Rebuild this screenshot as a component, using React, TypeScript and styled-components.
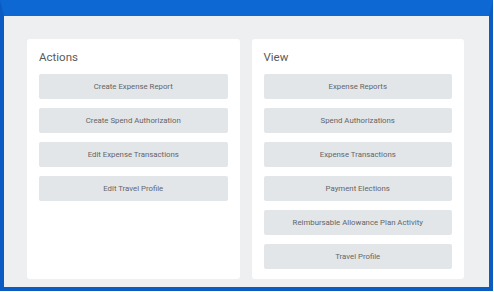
import styled, { createGlobalStyle } from "styled-components";

const GlobalStyle = createGlobalStyle`
  body {
    margin: 0;
    background: #ffffff;
    font-family: Roboto, "Liberation Sans", sans-serif;
  }
`;

const Frame = styled.div`
  box-sizing: border-box;
  width: 493px;
  height: 291px;
  border: 4px solid #0a5cc2;
  border-top: 16px solid #0d68d4;
  background: #eeeff1;
  padding: 23px 25px 8px 23px;
  display: flex;
  gap: 12px;
`;

const Card = styled.section`
  flex: 1;
  background: #ffffff;
  border-radius: 3px;
  padding: 11px 12px 10px;
  display: flex;
  flex-direction: column;
`;

const CardTitle = styled.h2`
  margin: 0 0 10px;
  font-size: 11.5px;
  line-height: 14px;
  font-weight: 400;
  color: #5a5a5a;
`;

const ButtonList = styled.div`
  display: flex;
  flex-direction: column;
  gap: 9px;
`;

const ActionButton = styled.button`
  height: 25px;
  border: none;
  border-radius: 2px;
  background: #e2e6e9;
  color: #62656a;
  font-family: Roboto, "Liberation Sans", sans-serif;
  font-size: 7.8px;
  padding: 0;
  cursor: pointer;
`;

const actions = [
  "Create Expense Report",
  "Create Spend Authorization",
  "Edit Expense Transactions",
  "Edit Travel Profile",
];

const views = [
  "Expense Reports",
  "Spend Authorizations",
  "Expense Transactions",
  "Payment Elections",
  "Reimbursable Allowance Plan Activity",
  "Travel Profile",
];

const Panel = ({ title, items }: { title: string; items: string[] }) => (
  <Card>
    <CardTitle>{title}</CardTitle>
    <ButtonList>
      {items.map((item) => (
        <ActionButton key={item}>{item}</ActionButton>
      ))}
    </ButtonList>
  </Card>
);

const App = () => {
  return (
    <>
      <GlobalStyle />
      <Frame>
        <Panel title="Actions" items={actions} />
        <Panel title="View" items={views} />
      </Frame>
    </>
  );
};

export default App;
